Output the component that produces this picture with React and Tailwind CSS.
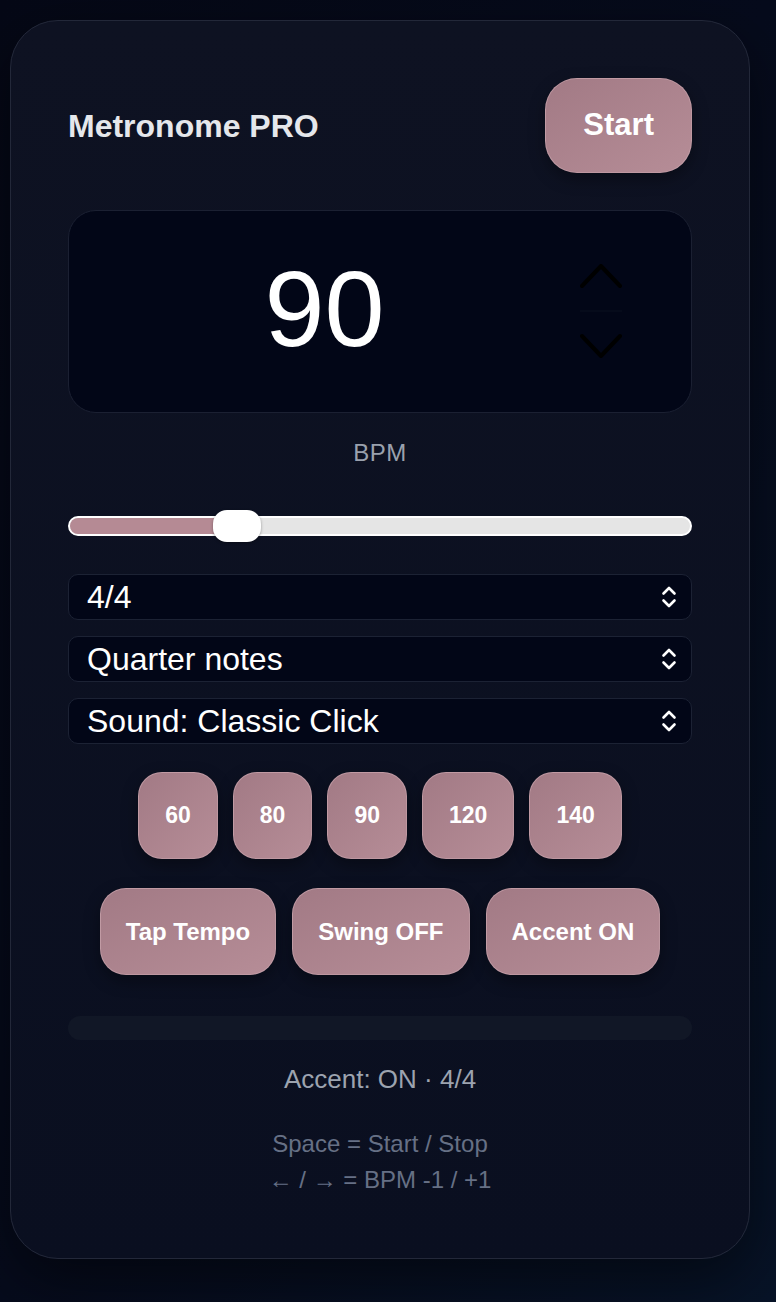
import { useState } from 'react';

const font = { fontFamily: '"Liberation Sans", Arial, sans-serif' };

const pinkBtn =
  'bg-gradient-to-br from-[#a27a85] to-[#b68d97] border border-[#c7a2ab]/70 text-white font-bold shadow-[0_6px_16px_rgba(0,0,0,0.35)]';

function UpDown() {
  return (
    <svg width="16" height="24" viewBox="0 0 16 24" fill="none" stroke="white" strokeWidth="2.6" strokeLinecap="round" strokeLinejoin="round">
      <path d="M2.5 8.5 L8 3 L13.5 8.5" />
      <path d="M2.5 15.5 L8 21 L13.5 15.5" />
    </svg>
  );
}

function Select({ value }) {
  return (
    <div className="h-[46px] flex items-center justify-between pl-[18px] pr-[14px] bg-[#020617] border border-[#1c2234] rounded-[10px]">
      <span className="text-[32px] text-white leading-none">{value}</span>
      <UpDown />
    </div>
  );
}

export default function App() {
  const [bpm] = useState(90);
  const presets = [60, 80, 90, 120, 140];
  const fill = 169; // px from left edge of track to thumb centre

  return (
    <div style={font} className="min-h-[1302px] bg-gradient-to-br from-[#050816] via-[#060b1c] to-[#071327] pt-[20px] pl-[10px] pb-[43px]">
      <div className="w-[740px] rounded-[48px] border border-[#232839] bg-gradient-to-b from-[#0e1222] to-[#0a0f20] shadow-[0_20px_60px_rgba(0,0,0,0.5)] px-[57px] pt-[57px] pb-[60px]">
        {/* header */}
        <div className="flex items-center justify-between h-[95px]">
          <h1 className="text-[32px] font-bold text-[#e5e7eb] leading-none">Metronome PRO</h1>
          <button className={`${pinkBtn} h-[95px] px-[37px] rounded-[32px] text-[31px]`}>Start</button>
        </div>

        {/* bpm display */}
        <div className="mt-[37px] h-[203px] flex items-center bg-[#020617] border border-[#1b2032] rounded-[28px] pr-[69px]">
          <div className="flex-1 text-center text-white text-[108px] leading-none pb-[6px]">{bpm}</div>
          <svg width="42" height="96" viewBox="0 0 42 96" fill="none" strokeLinecap="round" strokeLinejoin="round">
            <path d="M2 22 L21 2 L40 22" stroke="#000" strokeWidth="4" />
            <line x1="-12" y1="47" x2="54" y2="47" stroke="#0b1020" strokeWidth="1" />
            <path d="M2 72 L21 92 L40 72" stroke="#000" strokeWidth="4" />
          </svg>
        </div>

        <div className="mt-[27px] text-center text-[24px] leading-[25px] text-[#9aa1ad] tracking-[0.02em]">BPM</div>

        {/* slider */}
        <div className="mt-[45px] relative h-[32px] flex items-center">
          <div className="w-full h-[20px] rounded-full bg-[#e5e5e5] border-2 border-white overflow-hidden">
            <div className="h-full bg-[#b58a94]" style={{ width: fill }} />
          </div>
          <div
            className="absolute top-0 w-[48px] h-[32px] rounded-[14px] bg-white shadow-[0_1px_3px_rgba(0,0,0,0.35)]"
            style={{ left: fill - 24 }}
          />
        </div>

        {/* selects */}
        <div className="mt-[32px] flex flex-col gap-[16px]">
          <Select value="4/4" />
          <Select value="Quarter notes" />
          <Select value="Sound: Classic Click" />
        </div>

        {/* presets */}
        <div className="mt-[28px] flex justify-center gap-[15px]">
          {presets.map((p) => (
            <button key={p} className={`${pinkBtn} h-[87px] px-[26px] rounded-[24px] text-[23px]`}>
              {p}
            </button>
          ))}
        </div>

        {/* actions */}
        <div className="mt-[29px] flex justify-center gap-[16px]">
          <button className={`${pinkBtn} h-[87px] px-[25px] rounded-[26px] text-[24px]`}>Tap Tempo</button>
          <button className={`${pinkBtn} h-[87px] px-[25px] rounded-[26px] text-[24px]`}>Swing OFF</button>
          <button className={`${pinkBtn} h-[87px] px-[25px] rounded-[26px] text-[24px]`}>Accent ON</button>
        </div>

        {/* beat indicator */}
        <div className="mt-[41px] h-[24px] rounded-full bg-[#111726]" />

        <div className="mt-[25px] text-center text-[26px] leading-[29px] text-[#9ca3af]">Accent: ON · 4/4</div>

        <div className="mt-[32px] text-center text-[24px] leading-[36px] text-[#667085]">
          <div>Space = Start / Stop</div>
          <div>← / → = BPM -1 / +1</div>
        </div>
      </div>
    </div>
  );
}
